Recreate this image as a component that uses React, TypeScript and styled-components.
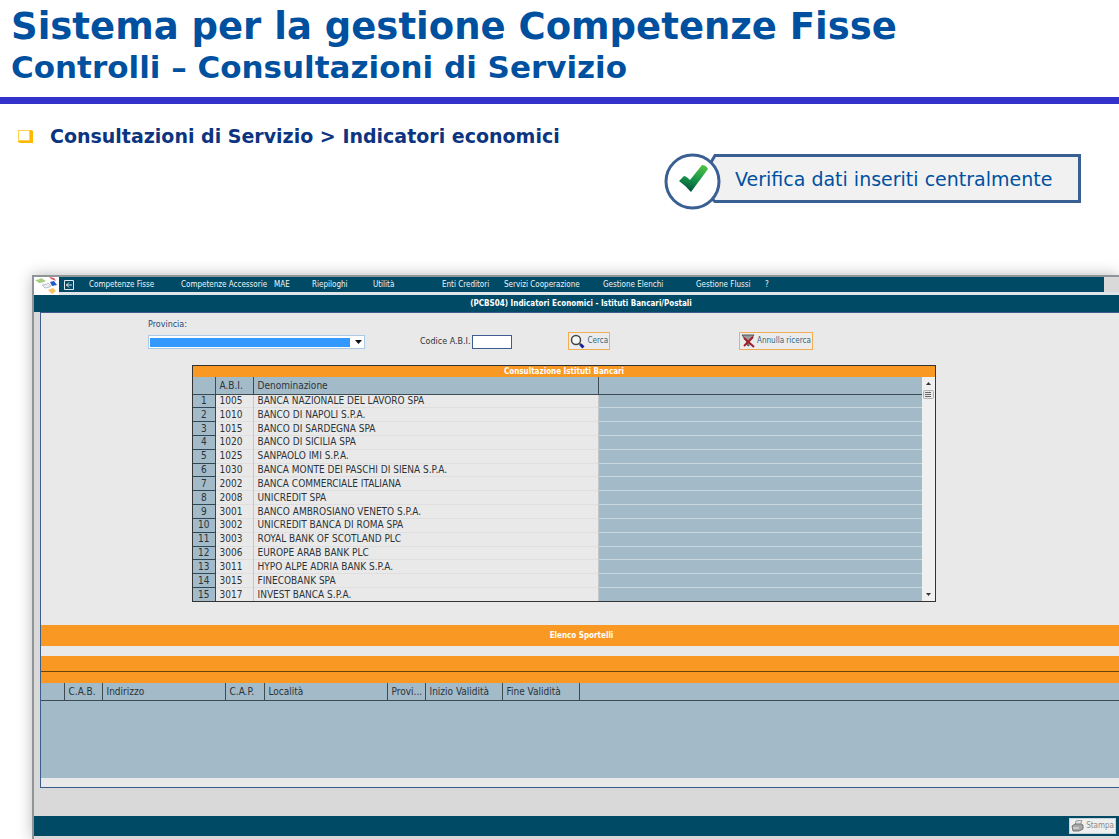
import React from "react";
import styled, { createGlobalStyle } from "styled-components";

const verdana = `Verdana, "DejaVu Sans", sans-serif`;
const tahoma = `Tahoma, "DejaVu Sans Condensed", "DejaVu Sans", sans-serif`;

const navy = "#004a66";
const orange = "#f99924";
const steel = "#a3bac8";
const ink = "#2b3338";

const GlobalStyle = createGlobalStyle`
  *, *::before, *::after { box-sizing: border-box; }
  body { margin: 0; background: #fff; font-family: ${verdana}; overflow: hidden; }
  h1, h2, p, ul { margin: 0; padding: 0; }
`;

const Slide = styled.main`
  display: flex;
  flex-direction: column;
  min-height: 100vh;
  overflow: hidden;
`;

const Heading = styled.header`
  height: 104px;
  padding: 5px 11px 0;
  border-bottom: 7px solid #3333cc;
  color: #0050a0;
  white-space: nowrap;
`;

const Title = styled.h1`
  font-size: 37px;
  line-height: 44px;
  font-weight: bold;
`;

const Subtitle = styled.h2`
  font-size: 31px;
  line-height: 36px;
  font-weight: bold;
`;

const Topic = styled.p`
  display: flex;
  align-items: center;
  gap: 17px;
  height: 24px;
  margin: 20px 0 0 18px;
  font-size: 19px;
  font-weight: bold;
  color: #0c3480;
`;

const Callout = styled.aside`
  display: flex;
  align-items: center;
  align-self: flex-end;
  margin: 5px 38px 0 0;
  height: 57px;
`;

const Seal = styled.svg`
  flex: none;
  position: relative;
  z-index: 1;
  margin-right: -5px;
`;

const CalloutText = styled.p`
  width: 365px;
  height: 49px;
  margin-bottom: 6px;
  padding-left: 19px;
  border: 3px solid #3a5f92;
  border-left: 0;
  background: #f1f1f2;
  color: #0050a0;
  font-size: 19px;
  line-height: 44px;
  white-space: nowrap;
`;

const Window = styled.section`
  flex: 1;
  display: flex;
  flex-direction: column;
  margin: 65px 0 0 32px;
  border: solid #8f9496;
  border-width: 2px 0 0 2px;
  background: #d9d9d9;
  box-shadow: 0 0 14px rgba(0, 0, 0, 0.28);
`;

const MenuRow = styled.nav`
  display: flex;
  height: 18px;
  border-bottom: 3px solid #dfe5e8;
`;

const Brand = styled.svg`
  flex: none;
  background: #fff;
  margin-bottom: -3px;
`;

const MenuBar = styled.div`
  flex: 1;
  display: flex;
  align-items: center;
  margin-right: 15px;
  padding-left: 5px;
  background: ${navy};
`;

const BackButton = styled.button`
  display: flex;
  width: 10px;
  height: 10px;
  padding: 0;
  border: 0;
  background: none;
`;

const MenuList = styled.ul`
  display: grid;
  grid-template-columns: 92px 93px 38px 61px 69px 62px 99px 93px 69px auto;
  margin-left: 15px;
  list-style: none;
`;

const MenuLink = styled.a`
  display: block;
  color: #eef5f7;
  font: 8px/14px ${tahoma};
  text-decoration: none;
  white-space: nowrap;
`;

const ScreenTitle = styled.h2`
  height: 17px;
  padding-left: 9px;
  background: ${navy};
  color: #fff;
  font: bold 8px/18px ${tahoma};
  text-align: center;
`;

const Panel = styled.div`
  margin-left: 6px;
  border: 1px solid #3b5c8c;
  border-right: 0;
  background: #e9e9e9;
`;

const SearchForm = styled.form`
  display: flex;
  align-items: flex-start;
  height: 52px;
  padding: 6px 0 0 107px;
`;

const Field = styled.div<{ $stacked?: boolean }>`
  display: flex;
  flex-direction: ${(p) => (p.$stacked ? "column" : "row")};
  align-items: ${(p) => (p.$stacked ? "stretch" : "center")};
  gap: ${(p) => (p.$stacked ? "4px" : "2px")};
  margin-top: ${(p) => (p.$stacked ? "0" : "16px")};
`;

const Label = styled.label<{ $tone?: string }>`
  color: ${(p) => p.$tone ?? ink};
  font: 8px/12px ${verdana};
  white-space: nowrap;
`;

const SelectBox = styled.div`
  position: relative;
  width: 217px;
  height: 14px;
`;

const Select = styled.select`
  appearance: none;
  display: block;
  width: 100%;
  height: 100%;
  border: 1px solid #a9c9e6;
  border-radius: 0;
  background: linear-gradient(#3399ff, #3399ff) 1px 2px / calc(100% - 15px) 9px no-repeat #fff;
  font: 8px ${tahoma};
`;

const Caret = styled.svg`
  position: absolute;
  right: 2px;
  top: 5px;
  pointer-events: none;
`;

const AbiInput = styled.input`
  width: 40px;
  height: 14px;
  padding: 0 2px;
  border: 1px solid #3f5c94;
  background: #fff;
  font: 8px ${tahoma};
`;

const Action = styled.button`
  display: flex;
  align-items: center;
  gap: 2px;
  height: 18px;
  margin-top: 13px;
  padding: 0 1px;
  border: 1px solid #f3ad55;
  background: #ececec;
  color: #31677f;
  font: 8px/14px ${tahoma};
  white-space: nowrap;
`;

const BankGrid = styled.div`
  display: flex;
  margin: 0 183px 0 151px;
  height: 237px;
  border: 1px solid #333;
  background: ${orange};
`;

const DataTable = styled.table`
  flex: 1;
  width: 100%;
  table-layout: fixed;
  border-collapse: collapse;
  color: ${ink};
  font: 10px/12px ${tahoma};
`;

const BankTable = styled(DataTable)`
  height: 224px;
`;

const Caption = styled.caption`
  height: 11px;
  padding-left: 13px;
  background: ${orange};
  color: #fff;
  font: bold 8px/11px ${tahoma};
`;

const Head = styled.th`
  height: 17px;
  padding: 1px 4px 0;
  border-bottom: 1px solid #3f4b52;
  border-right: 1px solid #3f4b52;
  background: ${steel};
  font-weight: normal;
  text-align: left;
  white-space: nowrap;

  &:last-child { border-right: 0; }
`;

const RowHead = styled.th`
  padding: 0;
  border: solid #2f4853;
  border-width: 1px 1px 0 0;
  background: ${steel};
  font-weight: normal;
  text-align: center;
`;

const Cell = styled.td<{ $fill?: boolean }>`
  padding: 0 4px;
  border-top: 1px solid ${(p) => (p.$fill ? "#c9d7de" : "#dfdfdf")};
  border-right: ${(p) => (p.$fill ? "0" : "1px solid #c4c8ca")};
  background: ${(p) => (p.$fill ? steel : "#e9e9e9")};
  overflow: hidden;
  white-space: nowrap;
`;

const Scrollbar = styled.div`
  display: flex;
  flex-direction: column;
  align-items: center;
  width: 13px;
  margin-top: 11px;
  background: #f0f0f0;
`;

const ScrollTrack = styled.div`
  flex: 1;
  width: 11px;
`;

const Thumb = styled.svg`
  display: block;
`;

const Band = styled.div<{ $tall?: boolean }>`
  height: ${(p) => (p.$tall ? "21px" : "15px")};
  margin: ${(p) => (p.$tall ? "23px 0 10px" : "0")};
  padding-left: 3px;
  background: ${orange};
  color: #fff;
  font: bold 8px/21px ${tahoma};
  text-align: center;
`;

const BranchGrid = styled.div`
  height: 107px;
  margin-bottom: 9px;
  padding-top: 11px;
  border-top: 1px solid #6b430f;
  background: linear-gradient(${orange} 11px, ${steel} 11px);
`;

const Footer = styled.footer`
  display: flex;
  align-items: center;
  justify-content: flex-end;
  height: 20px;
  margin: 28px 0 3px;
  padding-right: 3px;
  background: ${navy};
`;

const PrintButton = styled.button`
  display: flex;
  align-items: center;
  gap: 2px;
  height: 16px;
  padding: 0 1px;
  border: 1px solid #c7d4da;
  background: #efefef;
  color: #8b8b8b;
  font: 8px/12px ${tahoma};
`;

const menuItems = [
  "Competenze Fisse",
  "Competenze Accessorie",
  "MAE",
  "Riepiloghi",
  "Utilità",
  "Enti Creditori",
  "Servizi Cooperazione",
  "Gestione Elenchi",
  "Gestione Flussi",
  "?",
];

const banks: [string, string][] = [
  ["1005", "BANCA NAZIONALE DEL LAVORO SPA"],
  ["1010", "BANCO DI NAPOLI S.P.A."],
  ["1015", "BANCO DI SARDEGNA SPA"],
  ["1020", "BANCO DI SICILIA SPA"],
  ["1025", "SANPAOLO IMI S.P.A."],
  ["1030", "BANCA MONTE DEI PASCHI DI SIENA S.P.A."],
  ["2002", "BANCA COMMERCIALE ITALIANA"],
  ["2008", "UNICREDIT SPA"],
  ["3001", "BANCO AMBROSIANO VENETO S.P.A."],
  ["3002", "UNICREDIT BANCA DI ROMA SPA"],
  ["3003", "ROYAL BANK OF SCOTLAND PLC"],
  ["3006", "EUROPE ARAB BANK PLC"],
  ["3011", "HYPO ALPE ADRIA BANK S.P.A."],
  ["3015", "FINECOBANK SPA"],
  ["3017", "INVEST BANCA S.P.A."],
];

const branchColumns: [string, number | undefined][] = [
  ["", 23],
  ["C.A.B.", 38],
  ["Indirizzo", 123],
  ["C.A.P.", 39],
  ["Località", 123],
  ["Provi...", 38],
  ["Inizio Validità", 77],
  ["Fine Validità", 77],
  ["", undefined],
];

const Spacer = styled.div<{ $w: number }>`
  flex: none;
  width: ${(p) => p.$w}px;
`;

export default function App() {
  return (
    <Slide>
      <GlobalStyle />
      <Heading>
        <Title>Sistema per la gestione Competenze Fisse</Title>
        <Subtitle>Controlli – Consultazioni di Servizio</Subtitle>
      </Heading>

      <Topic>
        <svg width="15" height="15" viewBox="0 0 15 15" aria-hidden="true">
          <path d="M1 1H13L15 2V14H2L0 13V2Z" fill="#ffb800" />
          <rect x="0.500" y="1.500" width="11" height="10" fill="#fff" stroke="#ffcf55" />
        </svg>
        Consultazioni di Servizio &gt; Indicatori economici
      </Topic>

      <Callout>
        <Seal width="57" height="57" viewBox="0 0 57 57" aria-hidden="true">
          <defs>
            <linearGradient id="tick" x1="0.7" y1="0" x2="0.4" y2="1">
              <stop offset="0" stopColor="#4fc043" />
              <stop offset="0.55" stopColor="#17924a" />
              <stop offset="1" stopColor="#00503a" />
            </linearGradient>
          </defs>
          <path d="M46 11L51 2.500H57V48.500H51L46 44" fill="#f1f1f2" />
          <path d="M46 11L51 2.500H57M57 48.500H51L46 44" fill="none" stroke="#3a5f92" strokeWidth="3" />
          <circle cx="28.500" cy="28.500" r="26.500" fill="#fff" stroke="#3a5f92" strokeWidth="3" />
          <path d="M15 28L20 23Q22 23 26 27L38 12Q42 12 44 16L27 39Q22 33 15 28Z" fill="url(#tick)" />
        </Seal>
        <CalloutText>Verifica dati inseriti centralmente</CalloutText>
      </Callout>

      <Window>
        <MenuRow>
          <Brand width="25" height="18" viewBox="0 0 25 18" aria-hidden="true">
            <path d="M1 3Q5 3 7 1L12 4Q9 6 5 6Z" fill="#a9cf85" />
            <path d="M15 0L20 1L22 4L17 2Z" fill="#e2535b" />
            <path d="M16 5L20 4L23 8L18 9Z" fill="#2159cc" />
            <path d="M8 8Q13 8 14 6L17 9Q14 11 11 11Z" fill="#eceff2" stroke="#b9bfc6" />
            <path d="M14 13L19 11L22 14L18 17Z" fill="#f8c063" />
          </Brand>
          <MenuBar>
            <BackButton type="button" aria-label="Indietro">
              <svg width="10" height="10" viewBox="0 0 10 10" fill="none" stroke="#dfe9ed">
                <path d="M0.500 0.500H9.500V9.500H0.500Z M2 5H8 M5 2.500L2.500 5L5 7.500" />
              </svg>
            </BackButton>
            <MenuList>
              {menuItems.map((item) => (
                <li key={item}>
                  <MenuLink href="#">{item}</MenuLink>
                </li>
              ))}
            </MenuList>
          </MenuBar>
        </MenuRow>

        <ScreenTitle>(PCBS04) Indicatori Economici - Istituti Bancari/Postali</ScreenTitle>

        <Panel>
          <SearchForm onSubmit={(e) => e.preventDefault()}>
            <Field $stacked>
              <Label htmlFor="provincia" $tone="#274a78">Provincia:</Label>
              <SelectBox>
                <Select id="provincia" defaultValue="">
                  <option value=""></option>
                </Select>
                <Caret width="8" height="4" viewBox="0 0 8 4" aria-hidden="true">
                  <path d="M0 0H7L3.500 4Z" fill="#111" />
                </Caret>
              </SelectBox>
            </Field>
            <Spacer $w={55} />
            <Field>
              <Label htmlFor="abi">Codice A.B.I.</Label>
              <AbiInput id="abi" type="text" />
            </Field>
            <Spacer $w={56} />
            <Action type="submit">
              <svg width="15" height="15" viewBox="0 0 15 15" fill="none" aria-hidden="true">
                <circle cx="6" cy="6" r="4.500" fill="#f4f6f8" stroke="#444" strokeWidth="1.500" />
                <path d="M9 9L11 11" stroke="#555" strokeWidth="2" />
                <path d="M10.500 10.500L13.500 13.500" stroke="#16209e" strokeWidth="3" />
              </svg>
              Cerca
            </Action>
            <Spacer $w={129} />
            <Action type="reset">
              <svg width="14" height="14" viewBox="0 0 14 14" fill="none" aria-hidden="true">
                <path d="M1 1H13L8 8V12L6 11V8Z" fill="#9a9a9a" stroke="#555" />
                <path d="M3 4L13 13M12 3L3 12" stroke="#a32028" strokeWidth="2" />
              </svg>
              Annulla ricerca
            </Action>
          </SearchForm>

          <BankGrid>
            <BankTable>
              <Caption>Consultazione Istituti Bancari</Caption>
              <colgroup>
                <col style={{ width: 22 }} />
                <col style={{ width: 38 }} />
                <col style={{ width: 345 }} />
                <col />
              </colgroup>
              <thead>
                <tr>
                  <Head />
                  <Head>A.B.I.</Head>
                  <Head>Denominazione</Head>
                  <Head />
                </tr>
              </thead>
              <tbody>
                {banks.map(([abi, name], i) => (
                  <tr key={abi}>
                    <RowHead scope="row">{i + 1}</RowHead>
                    <Cell>{abi}</Cell>
                    <Cell>{name}</Cell>
                    <Cell $fill />
                  </tr>
                ))}
              </tbody>
            </BankTable>
            <Scrollbar>
              <svg width="11" height="11" viewBox="0 0 11 11" aria-hidden="true">
                <path d="M3 8L5.500 5L8 8Z" fill="#333" />
              </svg>
              <ScrollTrack>
                <Thumb width="11" height="12" viewBox="0 0 11 12" aria-hidden="true">
                  <rect x="0.500" y="2.500" width="10" height="8" rx="1" fill="#e9e9e9" stroke="#b0b0b0" />
                  <path d="M2 4.500H8M2 6.500H8M2 8.500H8" stroke="#666" />
                </Thumb>
              </ScrollTrack>
              <svg width="11" height="14" viewBox="0 0 11 14" aria-hidden="true">
                <path d="M3 6L5.500 9L8 6Z" fill="#333" />
              </svg>
            </Scrollbar>
          </BankGrid>

          <Band $tall>Elenco Sportelli</Band>
          <Band />
          <BranchGrid>
            <DataTable>
              <colgroup>
                {branchColumns.map(([name, width], i) => (
                  <col key={name + i} style={{ width }} />
                ))}
              </colgroup>
              <thead>
                <tr>
                  {branchColumns.map(([name], i) => (
                    <Head key={name + i}>{name}</Head>
                  ))}
                </tr>
              </thead>
            </DataTable>
          </BranchGrid>
        </Panel>

        <Footer>
          <PrintButton type="button">
            <svg width="13" height="12" viewBox="0 0 13 12" fill="none" aria-hidden="true">
              <path d="M5 1L11 0L9 6L4 6Z" fill="#e4e4e4" stroke="#999" />
              <path d="M1 6L4 4H10L12 5V9L8 11H2Z" fill="#a5a5a5" stroke="#777" />
              <path d="M2 8H8" stroke="#eee" />
            </svg>
            Stampa
          </PrintButton>
        </Footer>
      </Window>
    </Slide>
  );
}
